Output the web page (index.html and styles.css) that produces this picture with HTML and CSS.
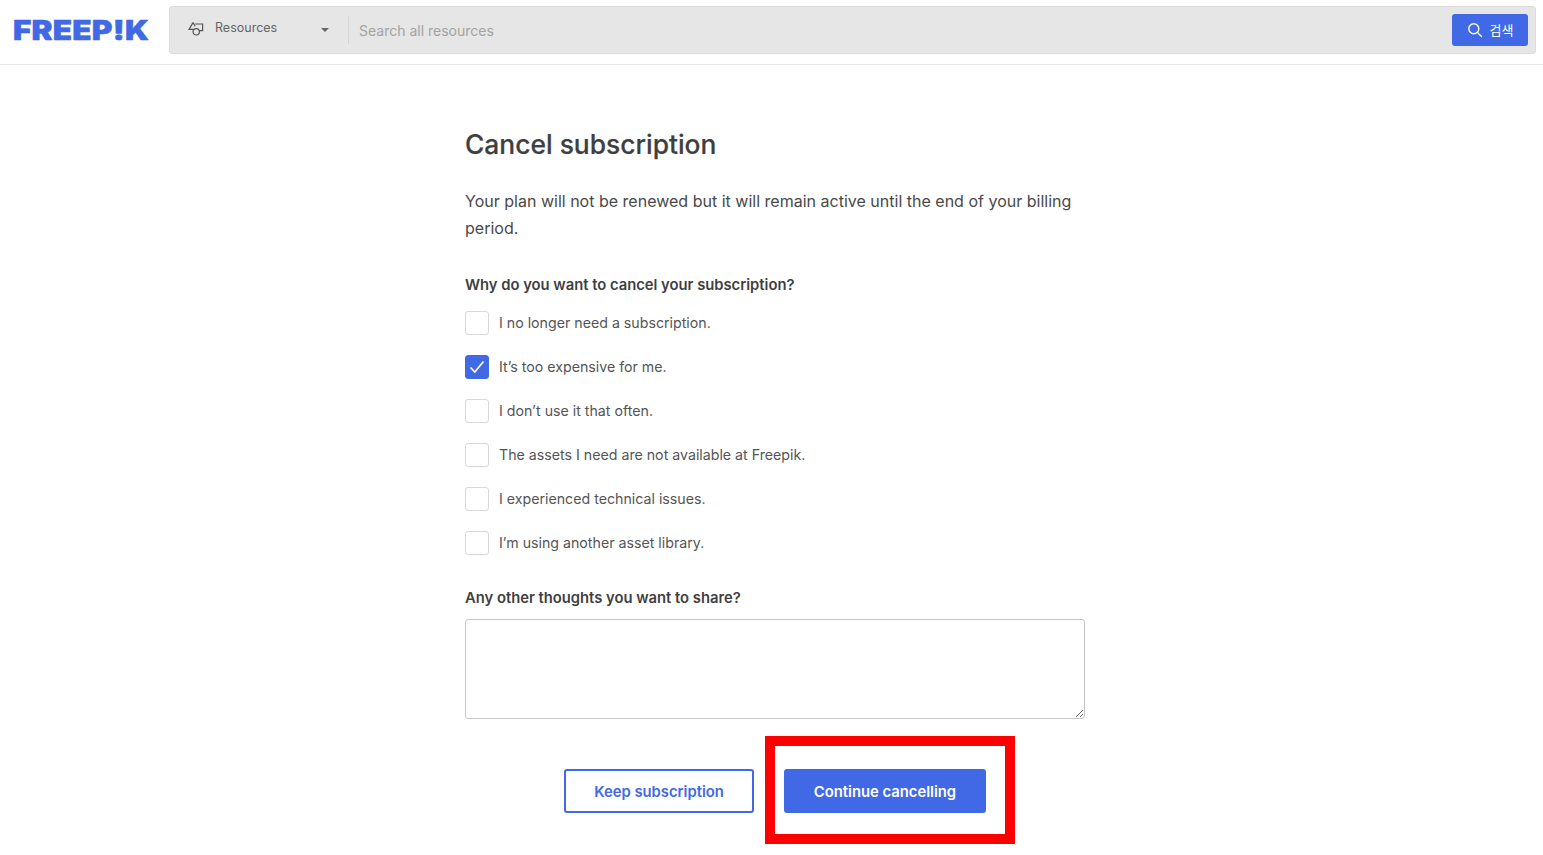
FILE: index.html
```html
<!DOCTYPE html>
<html lang="en">
<head>
<meta charset="utf-8">
<title>Cancel subscription</title>
<link rel="stylesheet" href="styles.css">
</head>
<body>
<header class="topbar">
  <div class="logo-wrap"><a class="logo">FREEP!K</a></div>
  <div class="search">
    <div class="type">
      <svg class="type-icon" width="16" height="16" viewBox="0 0 16 16" fill="none" stroke="#555" stroke-width="1.2"><path d="M5 1.6 1 8.4h5.2"/><path d="M5 1.6 7.2 5.2"/><path d="M7.2 3H14.6v6.6H11"/><circle cx="8.2" cy="10.8" r="3.2"/></svg>
      <span class="type-label">Resources</span>
      <span class="caret"></span>
    </div>
    <span class="placeholder">Search all resources</span>
    <button class="search-btn">
      <svg width="16" height="16" viewBox="0 0 16 16" fill="none" stroke="#fff" stroke-width="1.4"><circle cx="6.8" cy="6.8" r="5"/><path d="m10.5 10.5 4 4" stroke-linecap="round"/></svg>
      <span class="search-text">검색</span>
    </button>
  </div>
</header>
<main class="content">
  <h1 class="title">Cancel subscription</h1>
  <p class="lead">Your plan will not be renewed but it will remain active until the end of your billing period.</p>
  <h2 class="question">Why do you want to cancel your subscription?</h2>
  <ul class="options">
    <li class="option"><span class="box"></span>I no longer need a subscription.</li>
    <li class="option"><span class="box checked"><svg width="16" height="14" viewBox="0 0 16 14" fill="none" stroke="#fff" stroke-width="1.7"><path d="m1.5 7.5 4.3 4.5 8.7-10.5"/></svg></span>It’s too expensive for me.</li>
    <li class="option"><span class="box"></span>I don’t use it that often.</li>
    <li class="option"><span class="box"></span>The assets I need are not available at Freepik.</li>
    <li class="option"><span class="box"></span>I experienced technical issues.</li>
    <li class="option"><span class="box"></span>I’m using another asset library.</li>
  </ul>
  <h2 class="question thoughts">Any other thoughts you want to share?</h2>
  <textarea class="textarea"></textarea>
  <div class="actions">
    <button class="btn outline">Keep subscription</button>
    <button class="btn primary">Continue cancelling</button>
  </div>
</main>
<div class="highlight"></div>
</body>
</html>
```
FILE: styles.css
```css
* { box-sizing: border-box; }
html, body { margin: 0; height: 855px; overflow: hidden; }
body { background: #fff; font-family: Inter, "Liberation Sans", sans-serif; color: #444; position: relative; }

.topbar { height: 65px; display: flex; align-items: flex-start; padding: 6px 7px 0 14px; border-bottom: 1px solid #e7e7e7; }
.logo-wrap { width: 155px; height: 48px; flex: none; display: flex; align-items: center; padding-top: 2px; }
.logo { font-family: Inter, sans-serif; font-weight: 900; font-size: 27px; line-height: 24px; letter-spacing: 0.2px; color: #4169e6; -webkit-text-stroke: 0.5px #4169e6; transform: scaleX(1.165); transform-origin: left center; margin-left: -1px; }
.search { flex: 1; height: 48px; display: flex; align-items: center; background: #e6e6e6; border: 1px solid #dcdcdc; border-radius: 3px; padding-right: 7px; }
.type { width: 179px; height: 28px; flex: none; display: flex; align-items: center; padding: 0 19px 0 18px; border-right: 1px solid #d6d6d6; }
.type-icon { flex: none; margin-right: 11px; margin-top: -3px; }
.type-label { font-size: 12.5px; color: #666; flex: 1; margin-top: -6px; }
.caret { width: 0; height: 0; border: 4px solid transparent; border-top: 4px solid #666; border-bottom: 0; }
.placeholder { flex: 1; padding-left: 10px; font-size: 14px; color: #a3a3a3; }
.search-btn { width: 76px; height: 32px; display: flex; align-items: center; justify-content: center; gap: 7px; background: #4169e6; border: 0; border-radius: 3px; color: #fff; font-family: "Noto Sans CJK KR", sans-serif; font-size: 13px; padding: 0; }
.search-text { margin-top: -2px; }

.content { width: 620px; margin-left: 465px; padding-top: 62px; }
.title { margin: 0; font-size: 26.4px; line-height: 34px; font-weight: 500; color: #3f3f3f; -webkit-text-stroke: 0.2px #3f3f3f; }
.lead { margin: 27px 0 0; font-size: 16.02px; line-height: 27px; color: #4a4a4a; }
.question { margin: 32px 0 0; font-size: 14.77px; line-height: 22px; font-weight: 600; color: #3f3f3f; }
.options { list-style: none; margin: 4px 0 0; padding: 0; }
.option { height: 44px; display: flex; align-items: center; font-size: 14.2px; color: #555; }
.box { width: 24px; height: 24px; flex: none; margin: 2px 10px 0 0; border: 1px solid #d8d8d8; border-radius: 3px; display: flex; align-items: center; justify-content: center; background: #fff; }
.box.checked { background: #4169e6; border-color: #4169e6; }
.thoughts { margin-top: 23px; }
.textarea { display: block; width: 620px; height: 100px; margin-top: 10px; border: 1px solid #c6c6c6; border-radius: 3px; background: #fff; }
.actions { display: flex; margin-top: 50px; padding-left: 99px; gap: 30px; }
.btn { height: 44px; border-radius: 3px; font-family: Inter, sans-serif; font-size: 14.8px; font-weight: 600; padding: 2px 0 0; }
.outline { width: 190px; background: #fff; border: 2px solid #4169e6; color: #4169e6; }
.primary { width: 202px; background: #4169e6; border: 0; color: #fff; }

.highlight { position: absolute; left: 765px; top: 736px; width: 250px; height: 108px; border: 10px solid #ff0000; pointer-events: none; }
```
